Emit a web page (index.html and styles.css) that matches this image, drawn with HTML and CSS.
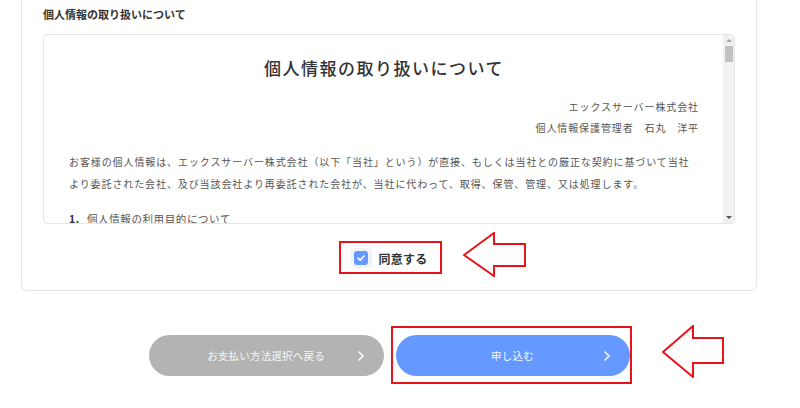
FILE: index.html
```html
<!DOCTYPE html>
<html lang="ja">
<head>
<meta charset="utf-8">
<title>個人情報の取り扱いについて</title>
<link rel="stylesheet" href="styles.css">
</head>
<body>
<div class="page">
  <section class="card">
    <h2 class="section-label">個人情報の取り扱いについて</h2>
    <div class="policy-box">
      <div class="policy-content">
        <h1 class="policy-title">個人情報の取り扱いについて</h1>
        <div class="policy-sign">
          <p>エックスサーバー株式会社</p>
          <p>個人情報保護管理者　石丸　洋平</p>
        </div>
        <p class="policy-text">お客様の個人情報は、エックスサーバー株式会社（以下「当社」という）が直接、もしくは当社との厳正な契約に基づいて当社より委託された会社、及び当該会社より再委託された会社が、当社に代わって、取得、保管、管理、又は処理します。</p>
        <ol class="policy-list">
          <li><span class="num">1.</span>個人情報の利用目的について</li>
        </ol>
      </div>
      <div class="fake-scrollbar">
        <span class="sb-arrow sb-up"></span>
        <span class="sb-thumb"></span>
        <span class="sb-space"></span>
        <span class="sb-arrow sb-down"></span>
      </div>
    </div>
    <label class="agree">
      <span class="check-wrap"><span class="check">
        <svg width="10" height="10" viewBox="0 0 10 10"><path d="M2 5.2 L4.2 7.2 L8 3" fill="none" stroke="#fff" stroke-width="1.6" stroke-linecap="round" stroke-linejoin="round"/></svg>
      </span></span>
      <span class="agree-text">同意する</span>
    </label>
  </section>

  <div class="actions">
    <button class="btn btn-back">お支払い方法選択へ戻る<svg class="chev" width="6" height="10" viewBox="0 0 6 10"><path d="M1 1 L5 5 L1 9" fill="none" stroke="#fff" stroke-width="1.5" stroke-linecap="round" stroke-linejoin="round"/></svg></button>
    <button class="btn btn-submit">申し込む<svg class="chev" width="6" height="10" viewBox="0 0 6 10"><path d="M1 1 L5 5 L1 9" fill="none" stroke="#fff" stroke-width="1.5" stroke-linecap="round" stroke-linejoin="round"/></svg></button>
  </div>

  <div class="mark mark-agree"></div>
  <svg class="arrow arrow-agree" width="64" height="45" viewBox="0 0 64 45"><polygon points="1,23 31,1 31,12 62,12 62,34 31,34 31,44" fill="#fff" stroke="#e8141b" stroke-width="2" stroke-linejoin="miter"/></svg>
  <div class="mark mark-submit"></div>
  <svg class="arrow arrow-submit" width="63" height="53" viewBox="0 0 63 53"><polygon points="1,27 31,1 31,13 61,13 61,38 31,38 31,52" fill="#fff" stroke="#e8141b" stroke-width="2" stroke-linejoin="miter"/></svg>
</div>
</body>
</html>
```

FILE: styles.css
```css
* { box-sizing: border-box; }
html, body { margin: 0; padding: 0; background: #fff; }
body {
  font-family: "Noto Sans CJK JP", "Noto Sans", sans-serif;
  color: #333;
  overflow: hidden;
}
.page {
  position: relative;
  display: flow-root;
  width: 800px;
  height: 408px;
}
.card {
  margin: -12px 0 0 21px;
  width: 736px;
  border: 1px solid #e3e3e3;
  border-radius: 6px;
  padding: 18px 21px 22px;
  display: flex;
  flex-direction: column;
}
.section-label {
  margin: 0 0 13px;
  font-size: 11px;
  line-height: 14px;
  font-weight: 700;
  color: #333;
}
.policy-box {
  height: 190px;
  border: 1px solid #e6e6e6;
  border-radius: 4px;
  display: flex;
  overflow: hidden;
}
.policy-content {
  flex: 1;
  overflow: hidden;
  padding: 21px 24px 0 25px;
  color: #555;
}
.policy-title {
  margin: 0;
  text-align: center;
  font-size: 17px;
  line-height: 24px;
  font-weight: 500;
  letter-spacing: 1.5px;
  color: #333;
}
.policy-sign {
  margin-top: 16px;
  text-align: right;
  font-size: 10px;
  line-height: 21px;
  letter-spacing: 0.9px;
}
.policy-sign p { margin: 0; }
.policy-text {
  margin: 13px 0 0;
  font-size: 10px;
  line-height: 22px;
  letter-spacing: 0.9px;
}
.policy-list {
  list-style: none;
  margin: 13px 0 0;
  padding: 0;
  font-size: 10.5px;
  line-height: 22px;
  letter-spacing: 0.6px;
}
.policy-list .num {
  display: inline-block;
  width: 18px;
  font-weight: 700;
  color: #333;
}
.fake-scrollbar {
  width: 11px;
  background: #f1f1f1;
  display: flex;
  flex-direction: column;
  align-items: center;
}
.sb-arrow {
  width: 0;
  height: 0;
  border-left: 3px solid transparent;
  border-right: 3px solid transparent;
}
.sb-up { margin-top: 4px; border-bottom: 3px solid #a3a3a3; }
.sb-down { margin-bottom: 4px; border-top: 3px solid #505050; }
.sb-thumb {
  margin-top: 4px;
  width: 8px;
  height: 16px;
  background: #c1c1c1;
}
.sb-space { flex: 1; }

.agree {
  margin-top: 24px;
  align-self: center;
  display: flex;
  align-items: center;
  gap: 7px;
  height: 20px;
}
.check-wrap {
  width: 21px;
  height: 20px;
  border-radius: 4px;
  background: #f1f3f7;
  display: flex;
  align-items: center;
  justify-content: center;
}
.check {
  width: 14px;
  height: 14px;
  border-radius: 3px;
  background: #6699ff;
  display: flex;
  align-items: center;
  justify-content: center;
}
.agree-text {
  font-size: 12px;
  font-weight: 700;
  color: #333;
  letter-spacing: 0.2px;
}

.actions {
  margin: 44px 0 0 21px;
  width: 736px;
  display: flex;
  justify-content: center;
  gap: 12px;
}
.btn {
  position: relative;
  width: 235px;
  height: 41px;
  border: none;
  border-radius: 21px;
  font-family: inherit;
  font-size: 10.5px;
  color: #f6f6f6;
  display: flex;
  align-items: center;
  justify-content: center;
  letter-spacing: 0.2px;
}
.btn-back { background: #b3b3b3; }
.btn-submit { background: #6699ff; width: 234px; }
.chev {
  position: absolute;
  right: 20px;
  top: 16px;
}

.mark {
  position: absolute;
  border: 2px solid #e8141b;
}
.mark-agree { left: 339px; top: 241px; width: 103px; height: 33px; }
.mark-submit { left: 391px; top: 326px; width: 241px; height: 58px; }
.arrow { position: absolute; }
.arrow-agree { left: 463px; top: 232px; }
.arrow-submit { left: 662px; top: 325px; }
```
